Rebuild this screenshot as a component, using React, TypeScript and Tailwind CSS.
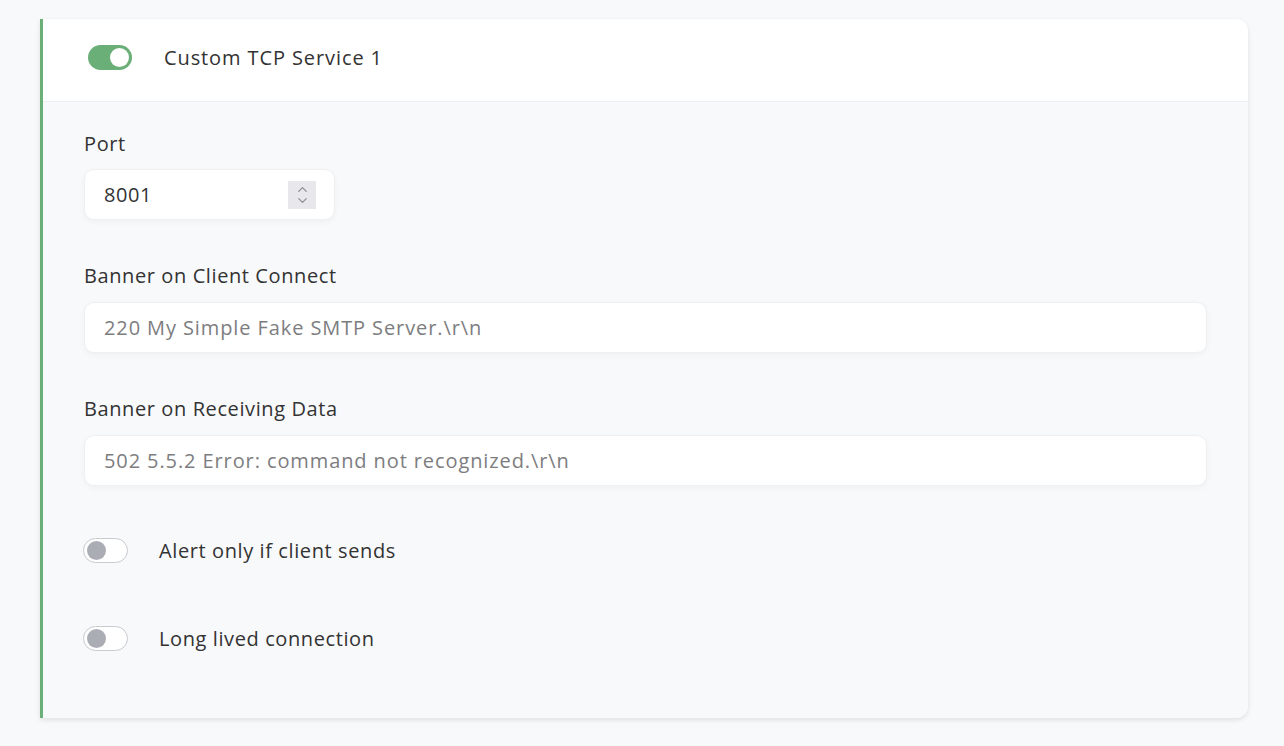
import { ChevronUp, ChevronDown } from "lucide-react";

const font = { fontFamily: "'Open Sans', Lato, sans-serif" };

function Toggle({ on }: { on: boolean }) {
  if (on) {
    return (
      <div className="relative w-[44px] h-[25px] rounded-full bg-[#6aae78] shrink-0">
        <div className="absolute right-[3px] top-[3px] w-[19px] h-[19px] rounded-full bg-white" />
      </div>
    );
  }
  return (
    <div className="relative w-[45px] h-[25px] rounded-full bg-white border border-[#c9cacf] shrink-0">
      <div className="absolute left-[3px] top-[2px] w-[19px] h-[19px] rounded-full bg-[#abadb4]" />
    </div>
  );
}

function Field({ label, placeholder }: { label: string; placeholder: string }) {
  return (
    <div className="flex flex-col">
      <label className="text-[20px] leading-[24px] tracking-[0.6px] text-[#333]">{label}</label>
      <div className="mt-[14px] h-[51px] bg-white rounded-[10px] border border-[#eef0f2] shadow-[0_2px_6px_rgba(0,0,0,0.04)] flex items-center px-[19px]">
        <span className="text-[20px] leading-[24px] tracking-[0.9px] text-[#7d7d80]">{placeholder}</span>
      </div>
    </div>
  );
}

function SwitchRow({ label }: { label: string }) {
  return (
    <div className="flex items-center gap-[31px] h-[25px] -ml-px">
      <Toggle on={false} />
      <span className="text-[20px] leading-[25px] tracking-[0.6px] text-[#333]">{label}</span>
    </div>
  );
}

export default function App() {
  return (
    <div className="min-h-screen bg-[#f8f9fb] pt-[19px] pl-[40px] pr-[36px] pb-[28px]" style={font}>
      <div className="border-l-[3px] border-[#6aae78] rounded-r-[12px] shadow-[0_2px_5px_rgba(0,0,0,0.10)]">
        {/* header */}
        <div className="h-[83px] bg-white rounded-tr-[12px] border-b border-[#eceef1] flex items-start pt-[26px] pl-[45px] gap-[32px]">
          <Toggle on />
          <span className="text-[20px] leading-[25px] tracking-[0.9px] text-[#333]">Custom TCP Service 1</span>
        </div>

        {/* body */}
        <div className="bg-[#f8f9fb] rounded-br-[12px] px-[41px] pt-[30px] pb-[67px]">
          <div className="flex flex-col">
            <label className="text-[20px] leading-[24px] tracking-[0.6px] text-[#333]">Port</label>
            <div className="mt-[13px] w-[251px] h-[51px] bg-white rounded-[10px] border border-[#eef0f2] shadow-[0_2px_6px_rgba(0,0,0,0.04)] flex items-center justify-between pl-[19px] pr-[18px]">
              <span className="text-[20px] leading-[24px] tracking-[0.6px] text-[#333]">8001</span>
              <div className="w-[28px] h-[28px] bg-[#e8e8ec] flex flex-col items-center justify-center text-[#8d8d93]">
                <ChevronUp size={15} strokeWidth={2} className="-mb-[2px]" />
                <ChevronDown size={15} strokeWidth={2} className="-mt-[2px]" />
              </div>
            </div>
          </div>

          <div className="mt-[44px]">
            <Field label="Banner on Client Connect" placeholder="220 My Simple Fake SMTP Server.\r\n" />
          </div>
          <div className="mt-[44px]">
            <Field label="Banner on Receiving Data" placeholder="502 5.5.2 Error: command not recognized.\r\n" />
          </div>

          <div className="mt-[52px] flex flex-col gap-[63px]">
            <SwitchRow label="Alert only if client sends" />
            <SwitchRow label="Long lived connection" />
          </div>
        </div>
      </div>
    </div>
  );
}
